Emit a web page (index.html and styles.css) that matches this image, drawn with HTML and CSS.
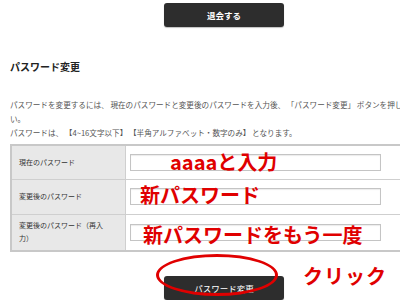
FILE: index.html
```html
<!DOCTYPE html>
<html lang="ja">
<head>
<meta charset="utf-8">
<link rel="stylesheet" href="styles.css">
</head>
<body>
<div class="page">
  <div class="btn">退会する</div>
  <h2 class="title">パスワード変更</h2>
  <p class="desc">パスワードを変更するには、 現在のパスワードと変更後のパスワードを入力後、 「パスワード変更」 ボタンを押してくださ<br>い。<br>パスワードは、 【4~16文字以下】 【半角アルファベット・数字のみ】 となります。</p>
  <table class="form">
    <tr class="r1">
      <th>現在のパスワード</th>
      <td><div class="field"></div><span class="note n1">aaaaと入力</span></td>
    </tr>
    <tr class="r2">
      <th>変更後のパスワード</th>
      <td><div class="field"></div><span class="note n2">新パスワード</span></td>
    </tr>
    <tr class="r3">
      <th>変更後のパスワード（再入<br>力）</th>
      <td><div class="field"></div><span class="note n3">新パスワードをもう一度</span></td>
    </tr>
  </table>
  <div class="actions">
    <div class="btn btn-sm">パスワード変更</div>
    <div class="ring"></div>
    <span class="click">クリック</span>
  </div>
</div>
</body>
</html>
```
FILE: styles.css
```css
html, body {
  margin: 0;
  width: 400px;
  height: 300px;
  overflow: hidden;
  background: #fff;
}
body {
  font-family: "Noto Sans CJK JP", "Noto Sans", sans-serif;
  color: #333;
}
.page {
  width: 448px;
  box-sizing: border-box;
  padding: 3px 10px 0;
}
.btn {
  width: 120px;
  height: 24px;
  margin: 0 auto;
  background: #2d2d2d;
  color: #fff;
  border-radius: 3px;
  font-size: 8.5px;
  font-weight: bold;
  line-height: 24px;
  text-align: center;
  box-shadow: 0 1px 1px rgba(0,0,0,0.25);
}
.btn-sm {
  font-weight: normal;
}
.title {
  margin: 33px 0 0;
  font-size: 10px;
  line-height: 14px;
  font-weight: bold;
  color: #222;
}
.desc {
  margin: 24px 0 0;
  font-size: 7.6px;
  line-height: 14px;
  color: #555;
  white-space: nowrap;
}
.form {
  margin-top: 4px;
  width: 438px;
  border-collapse: collapse;
  border: 2px solid #c8c8c8;
}
.form th, .form td {
  border: 1px solid #cfcfcf;
  padding: 0;
}
.form th {
  width: 106px;
  background: #e8e8e8;
  text-align: left;
  font-weight: normal;
  font-size: 7px;
  line-height: 13px;
  color: #333;
  padding-left: 7px;
  vertical-align: middle;
}
.form td {
  position: relative;
  padding-left: 4px;
  vertical-align: middle;
}
.r1 { height: 34px; }
.r2 { height: 35px; }
.r3 { height: 37px; }
.field {
  width: 249px;
  height: 15px;
  border: 1px solid #c4c4c4;
  background: #fff;
  box-shadow: inset 0 1px 1px rgba(0,0,0,0.08);
}
.note {
  position: absolute;
  color: #e00000;
  font-size: 20px;
  line-height: 22px;
  font-weight: bold;
  white-space: nowrap;
}
.n1 { left: 44px; top: 5px; }
.n2 { left: 14px; top: 4px; }
.n3 { left: 17px; top: 9px; }
.actions {
  position: relative;
  margin-top: 24px;
}
.ring {
  position: absolute;
  left: 146px;
  top: -22px;
  width: 116px;
  height: 36px;
  border: 3px solid #e00000;
  border-radius: 50%;
}
.click {
  position: absolute;
  left: 293px;
  top: -12px;
  color: #e00000;
  font-size: 20px;
  line-height: 24px;
  font-weight: bold;
  letter-spacing: 1px;
}
```
